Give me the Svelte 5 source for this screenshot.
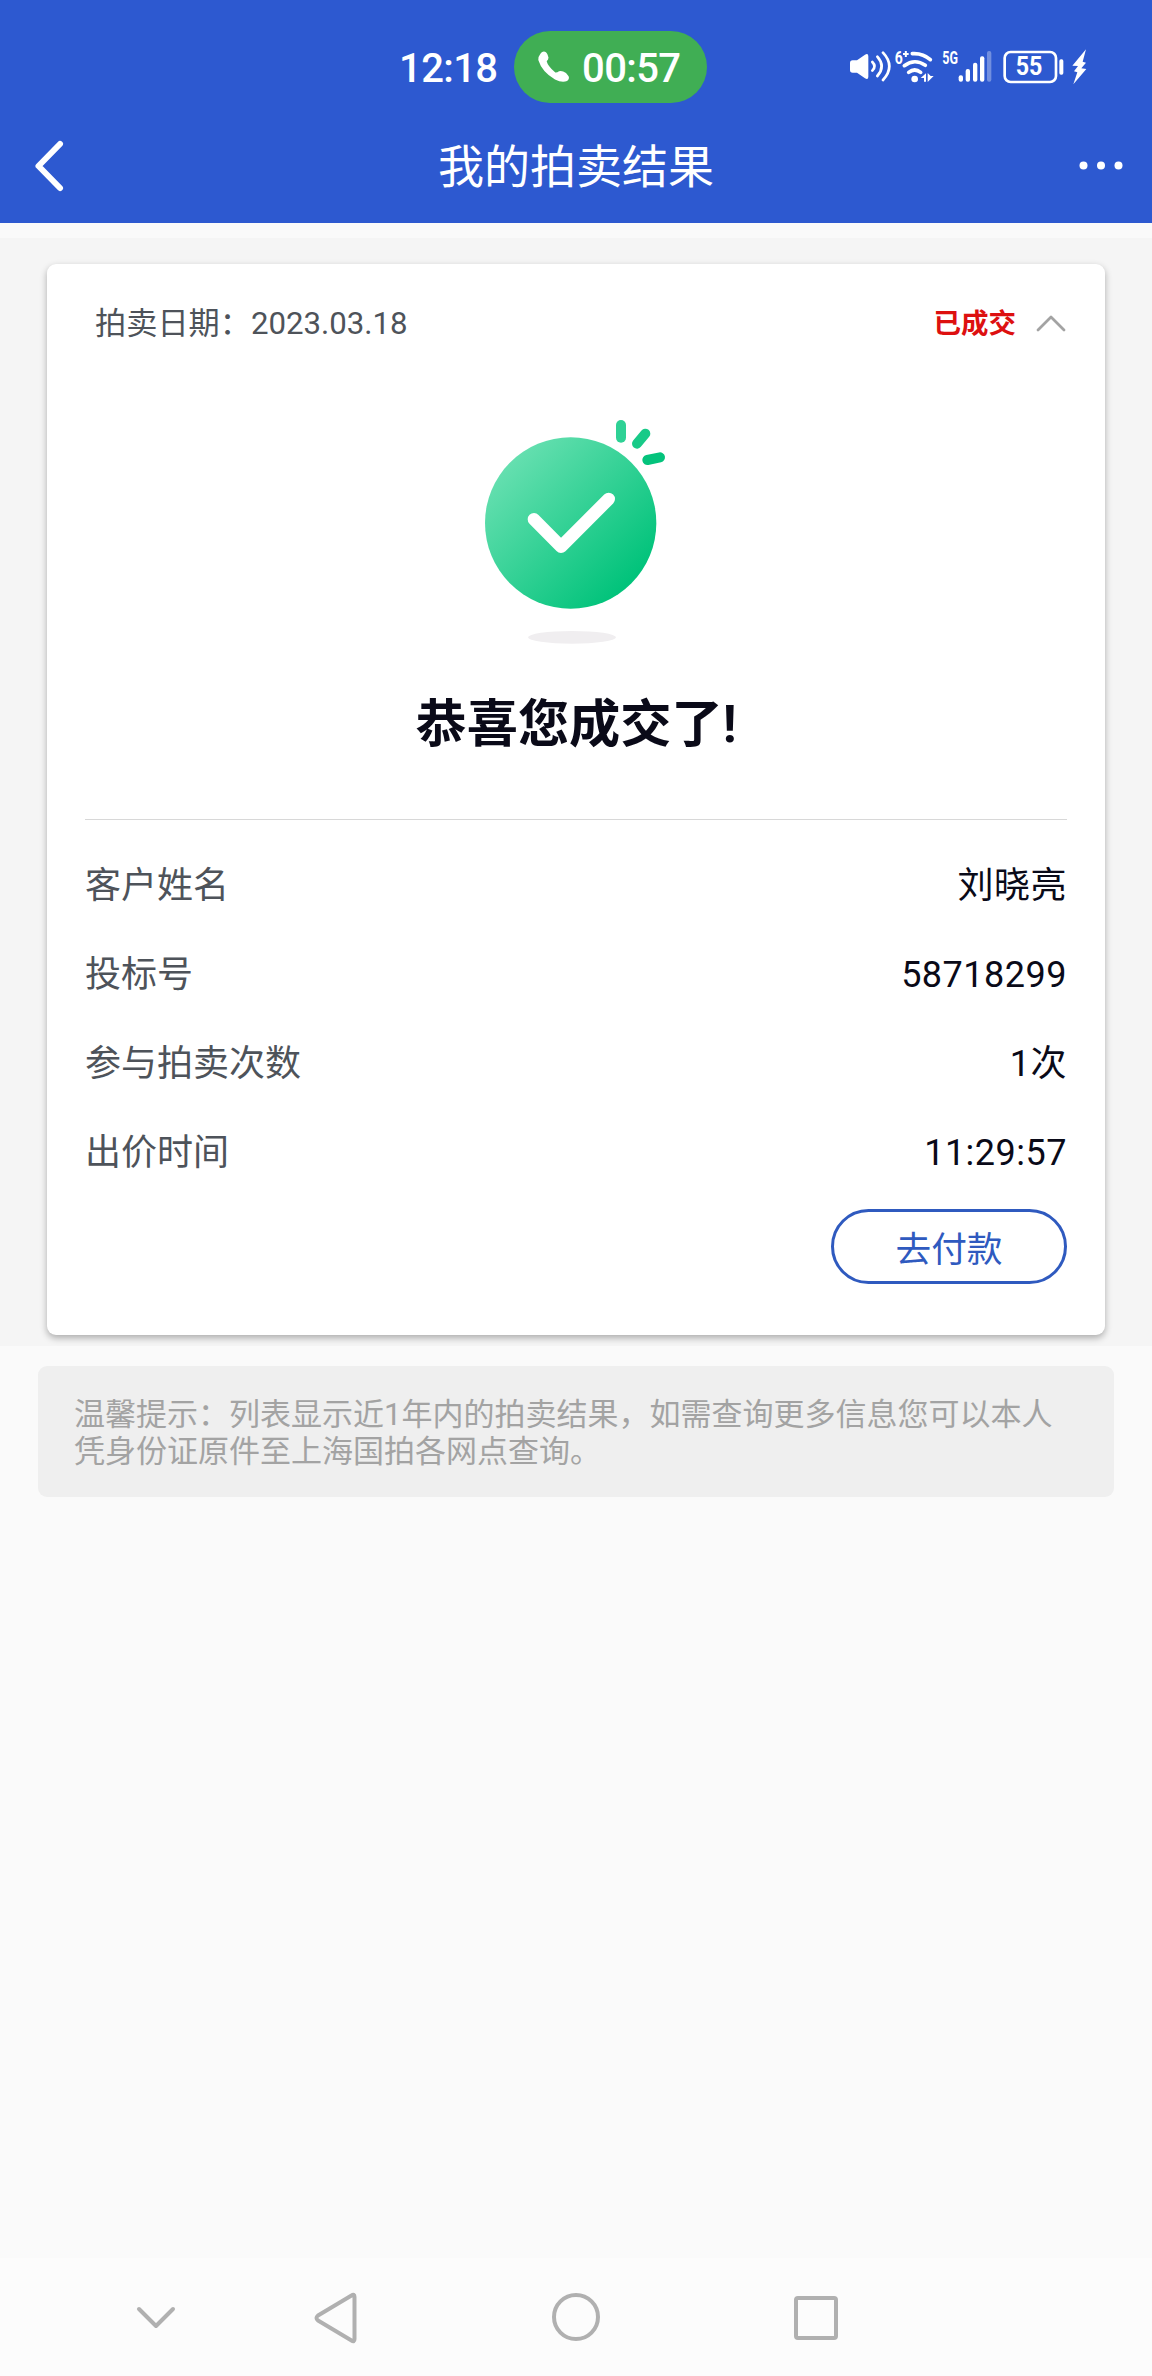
<script>
	let expanded = true;

	const rows = [
		{ label: "客户姓名", value: "刘晓亮" },
		{ label: "投标号", value: "58718299" },
		{ label: "参与拍卖次数", value: "1次" },
		{ label: "出价时间", value: "11:29:57" },
	];

	function toggle() {
		expanded = !expanded;
	}
</script>

<div class="screen">
	<header>
		<div class="status">
			<span class="clock">12:18</span>
			<div class="call">
				<svg width="34" height="34" viewBox="-1 -1 34 34">
					<path d="M2 3.500C4-.5 8-.5 9.500 3.500l1 3Q10.500 8.500 8.700 10.200 9.700 15 17.300 21.500q1.700.3 3.700-1.200 3-1 7 1.700l2.600 3.200q1.200 2.800-1.600 4.800-5 2-12-1.500Q4 21 .3 9-.2 6 2 3.500z" fill="#fff" />
				</svg>
				<span>00:57</span>
			</div>
			<div class="signals">
				<!-- volume -->
				<svg width="44" height="38" viewBox="54 56 132 114">
					<path d="M68 93h13l24-17q10-5 10 5v61q0 10-10 5l-24-17H68q-8 0-8-8V101q0-8 8-8z" fill="#fff" />
					<g fill="none" stroke="#fff" stroke-width="8" stroke-linecap="round">
						<path d="M127 98q13 13 0 26" />
						<path d="M142 82q26 29 0 58" />
						<path d="M159 70q38 41 0 82" />
					</g>
				</svg>
				<!-- wifi -->
				<svg class="wifi" width="42" height="38" viewBox="192 56 126 114">
					<text x="194" y="104" font-size="54" textLength="24" lengthAdjust="spacingAndGlyphs">6</text>
					<path d="M219 74h17M227.500 65v18" stroke="#fff" stroke-width="6" />
					<g fill="none" stroke="#fff" stroke-width="11" stroke-linecap="round">
						<path d="M247 73q32-2 54 18" />
						<path d="M223 109q31-23 63-1" />
						<path d="M236 129q18-14 36 0" />
					</g>
					<circle cx="254" cy="149" r="10" fill="#fff" />
					<path d="M288 132v25h-6v-11h-10zM293 131v27l18-18h-9z" fill="#fff" />
				</svg>
				<!-- cellular -->
				<svg class="cell" width="54" height="38" viewBox="330 56 162 114">
					<text x="337" y="105" font-size="53" textLength="47" lengthAdjust="spacingAndGlyphs">5G</text>
					<g fill="#fff">
						<rect x="386" y="138" width="13" height="19" rx="6" />
						<rect x="407" y="119" width="13" height="38" rx="6" />
						<rect x="429" y="100" width="13" height="57" rx="6" />
						<rect x="450" y="81" width="13" height="76" rx="6" />
						<rect x="471" y="65" width="13" height="92" rx="6" opacity=".33" />
					</g>
				</svg>
				<!-- battery -->
				<svg class="battery" width="64" height="38" viewBox="516 56 192 114">
					<rect x="524" y="68" width="154" height="90" rx="18" fill="none" stroke="#fff" stroke-width="8" />
					<rect x="688" y="90" width="12" height="46" rx="5" fill="#fff" />
					<text x="557" y="138" font-size="75" textLength="80" lengthAdjust="spacingAndGlyphs">55</text>
				</svg>
				<svg width="18" height="38" viewBox="720 56 54 114">
					<path d="M768 60l-41 49 17 1-12 16 10 3-12 36 39-46-15-2 14-17-10-3z" fill="#fff" />
				</svg>
			</div>
		</div>
		<nav>
			<svg class="back" width="36" height="54" viewBox="0 0 36 54">
				<path d="M28 5L6.500 27 28 49" fill="none" stroke="#fff" stroke-width="6" stroke-linecap="round" stroke-linejoin="round" />
			</svg>
			<h1>我的拍卖结果</h1>
			<svg class="more" width="46" height="10" viewBox="0 0 46 10" fill="#fff">
				<circle cx="5.500" cy="4.500" r="4" />
				<circle cx="23" cy="4.500" r="4" />
				<circle cx="40.500" cy="4.500" r="4" />
			</svg>
		</nav>
	</header>

	<section class="list">
		<article>
			<!-- svelte-ignore a11y_click_events_have_key_events, a11y_no_static_element_interactions -->
			<div class="head" on:click={toggle}>
				<span>拍卖日期：2023.03.18</span>
				<b>已成交</b>
				<svg class:closed={!expanded} width="32" height="20" viewBox="0 0 32 20">
					<path d="M3 17L16 4l13 13" fill="none" stroke="#a3a3a3" stroke-width="2.800" stroke-linecap="round" stroke-linejoin="round" />
				</svg>
			</div>

			{#if expanded}
				<div class="result">
					<svg width="230" height="260" viewBox="0 0 690 780">
						<defs>
							<linearGradient id="disc" x1="0.1" y1="0.15" x2="0.82" y2="0.86">
								<stop offset="0" stop-color="#68e0b1" />
								<stop offset="1" stop-color="#02c37b" />
							</linearGradient>
						</defs>
						<ellipse cx="336" cy="712" rx="132" ry="19" fill="#f0eef0" />
						<circle cx="332" cy="369" r="257" fill="url(#disc)" />
						<path d="M222 358l81 82 143-143" fill="none" stroke="#fff" stroke-width="38" stroke-linecap="round" stroke-linejoin="round" />
						<g fill="none" stroke-width="30" stroke-linecap="round">
							<path d="M483 75v38" stroke="#2ed195" />
							<path d="M556 101l-25 30" stroke="#18ca88" />
							<path d="M562 180l38-8" stroke="#04c37c" />
						</g>
					</svg>
					<h2>恭喜您成交了!</h2>
				</div>

				<dl>
					{#each rows as row}
						<div class="row">
							<dt>{row.label}</dt>
							<dd>{row.value}</dd>
						</div>
					{/each}
				</dl>

				<button>去付款</button>
			{/if}
		</article>
	</section>

	<p class="tip">温馨提示：列表显示近1年内的拍卖结果，如需查询更多信息您可以本人凭身份证原件至上海国拍各网点查询。</p>

	<footer>
		<svg width="44" height="56" viewBox="0 0 44 56">
			<path d="M5 20l17 17 17-17" />
		</svg>
		<svg width="56" height="56" viewBox="0 0 56 56">
			<path d="M43.500 6.500q3-2 3 1.500v42q0 3.500-3 1.500L10 31.500q-3-2.500 0-5z" />
		</svg>
		<svg width="56" height="56" viewBox="0 0 56 56">
			<circle cx="28" cy="28" r="22" />
		</svg>
		<svg width="56" height="56" viewBox="0 0 56 56">
			<rect x="8" y="9" width="40" height="40" rx="2" />
		</svg>
	</footer>
</div>

<style>
	:global(body) {
		margin: 0;
		background: #fafafa;
	}

	.screen {
		display: flex;
		flex-direction: column;
		height: 2376px;
		background: #fafafa;
		font-family: Roboto, "Noto Sans CJK SC", sans-serif;
		color: #0a0a18;
	}

	header {
		height: 223px;
		background: #2d59d0;
		color: #fff;
	}

	.status {
		box-sizing: border-box;
		display: flex;
		align-items: center;
		height: 108px;
		padding: 26px 64px 0 399px;
		font-size: 40px;
		font-weight: 500;
		line-height: 1;
	}

	.status span {
		padding-top: 3px;
		letter-spacing: -0.6px;
	}

	.clock {
		width: 115px;
	}

	.call {
		box-sizing: border-box;
		display: flex;
		align-items: center;
		gap: 11px;
		width: 193px;
		height: 72px;
		padding-left: 23px;
		border-radius: 36px;
		background: #40ae54;
	}

	.signals {
		display: flex;
		margin-left: auto;
	}

	.signals text {
		fill: #fff;
		font-weight: 700;
	}

	.wifi {
		margin-left: 2px;
	}

	.cell {
		margin-left: 4px;
	}

	.battery {
		margin-left: 8px;
		margin-right: 4px;
	}

	nav {
		display: flex;
		align-items: center;
		justify-content: space-between;
		height: 115px;
		padding: 0 28px 0 32px;
	}

	.back {
		width: 36px;
		margin-right: 6px;
	}

	h1 {
		margin: 3px 0 0;
		font-size: 46px;
		font-weight: 400;
		line-height: 60px;
	}

	.list {
		margin-top: 15px;
		padding: 26px 47px 11px;
		background: #f5f5f5;
	}

	article {
		box-sizing: border-box;
		display: flex;
		flex-direction: column;
		height: 1071px;
		padding: 0 38px;
		border-radius: 9px;
		background: #fff;
		box-shadow: 0 3px 7px rgba(0, 0, 0, 0.3);
	}

	.head {
		display: flex;
		align-items: center;
		height: 118px;
		padding-left: 10px;
		font-size: 31.200px;
		line-height: 40px;
		color: #4e535a;
	}

	.head span,
	.head b {
		padding-top: 2px;
	}

	.head b {
		margin-left: auto;
		font-size: 27.500px;
		color: #dd1010;
	}

	.head svg {
		margin-left: 19px;
	}

	.head .closed {
		transform: rotate(180deg);
	}

	.result {
		display: flex;
		flex-direction: column;
		align-items: center;
		height: 438px;
		padding-top: 18px;
		box-sizing: border-box;
		border-bottom: 1px solid #d8d8d8;
	}

	.result svg {
		margin-right: 2px;
	}

	h2 {
		margin: 33px 0 0;
		font-size: 51.200px;
		font-weight: 700;
		line-height: 64px;
	}

	dl {
		margin: 22px 0 11px;
	}

	.row {
		display: flex;
		justify-content: space-between;
		height: 89px;
		font-size: 36px;
		line-height: 89px;
	}

	dt {
		color: #4e535a;
	}

	dd {
		margin: 0;
		letter-spacing: 0.5px;
	}

	button {
		align-self: flex-end;
		width: 236px;
		height: 75px;
		padding: 0;
		border: 3px solid #2f5abf;
		border-radius: 38px;
		background: #fff;
		font-family: inherit;
		font-size: 35.700px;
		color: #2f5abf;
	}

	.tip {
		box-sizing: border-box;
		height: 131px;
		margin: 20px 38px 0;
		padding: 30px 37px 28px 36px;
		border-radius: 9px;
		background: #efefef;
		font-size: 31px;
		line-height: 37px;
		color: #a3a3a3;
	}

	footer {
		display: flex;
		align-items: center;
		height: 118px;
		margin-top: auto;
		padding-left: 134px;
		background: #fcfcfc;
	}

	footer svg {
		fill: none;
		stroke: #b0b0b0;
		stroke-width: 4;
		stroke-linecap: round;
		stroke-linejoin: round;
	}

	footer svg:nth-child(2) {
		margin-left: 130px;
	}

	footer svg:nth-child(3),
	footer svg:nth-child(4) {
		margin-left: 184px;
	}
</style>
